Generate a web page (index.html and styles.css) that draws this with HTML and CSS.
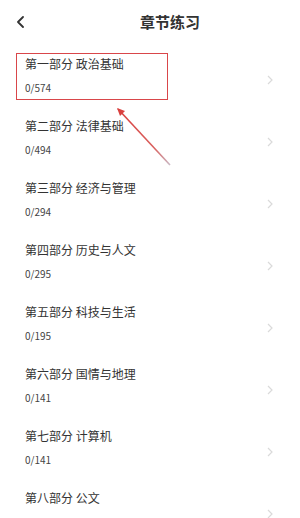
FILE: index.html
```
<!DOCTYPE html>
<html lang="zh-CN">
<head>
    <meta charset="UTF-8">
    <meta name="viewport" content="width=device-width, initial-scale=1.0">
    <title>章节练习</title>
    <link rel="stylesheet" href="styles.css">
</head>
<body>
    <div class="header">
        <span class="back">
            <svg width="10" height="12" viewBox="0 0 10 12"><path d="M7 1 L2 6 L7 11" fill="none" stroke="#333" stroke-width="1.8" stroke-linecap="round" stroke-linejoin="round"/></svg>
        </span>
        <div class="title">章节练习</div>
    </div>

    <div class="list">
        <div class="item">
            <div class="info">
                <div class="name">第一部分 政治基础</div>
                <div class="count">0/574</div>
            </div>
            <span class="arrow-right"><svg width="6" height="10" viewBox="0 0 6 10"><path d="M1 1 L5 5 L1 9" fill="none" stroke="#dadada" stroke-width="1.2"/></svg></span>
            <div class="mark-box"></div>
        </div>
        <div class="item">
            <div class="info">
                <div class="name">第二部分 法律基础</div>
                <div class="count">0/494</div>
            </div>
            <span class="arrow-right"><svg width="6" height="10" viewBox="0 0 6 10"><path d="M1 1 L5 5 L1 9" fill="none" stroke="#dadada" stroke-width="1.2"/></svg></span>
        </div>
        <div class="item">
            <div class="info">
                <div class="name">第三部分 经济与管理</div>
                <div class="count">0/294</div>
            </div>
            <span class="arrow-right"><svg width="6" height="10" viewBox="0 0 6 10"><path d="M1 1 L5 5 L1 9" fill="none" stroke="#dadada" stroke-width="1.2"/></svg></span>
        </div>
        <div class="item">
            <div class="info">
                <div class="name">第四部分 历史与人文</div>
                <div class="count">0/295</div>
            </div>
            <span class="arrow-right"><svg width="6" height="10" viewBox="0 0 6 10"><path d="M1 1 L5 5 L1 9" fill="none" stroke="#dadada" stroke-width="1.2"/></svg></span>
        </div>
        <div class="item">
            <div class="info">
                <div class="name">第五部分 科技与生活</div>
                <div class="count">0/195</div>
            </div>
            <span class="arrow-right"><svg width="6" height="10" viewBox="0 0 6 10"><path d="M1 1 L5 5 L1 9" fill="none" stroke="#dadada" stroke-width="1.2"/></svg></span>
        </div>
        <div class="item">
            <div class="info">
                <div class="name">第六部分 国情与地理</div>
                <div class="count">0/141</div>
            </div>
            <span class="arrow-right"><svg width="6" height="10" viewBox="0 0 6 10"><path d="M1 1 L5 5 L1 9" fill="none" stroke="#dadada" stroke-width="1.2"/></svg></span>
        </div>
        <div class="item">
            <div class="info">
                <div class="name">第七部分 计算机</div>
                <div class="count">0/141</div>
            </div>
            <span class="arrow-right"><svg width="6" height="10" viewBox="0 0 6 10"><path d="M1 1 L5 5 L1 9" fill="none" stroke="#dadada" stroke-width="1.2"/></svg></span>
        </div>
        <div class="item">
            <div class="info">
                <div class="name">第八部分 公文</div>
            </div>
            <span class="arrow-right"><svg width="6" height="10" viewBox="0 0 6 10"><path d="M1 1 L5 5 L1 9" fill="none" stroke="#dadada" stroke-width="1.2"/></svg></span>
        </div>
    </div>

    <!-- annotation arrow pointing at the first item -->
    <svg class="pointer" width="80" height="80" viewBox="0 0 80 80">
        <defs>
            <linearGradient id="fade" x1="0" y1="0" x2="1" y2="1">
                <stop offset="0" stop-color="#d9413f"/>
                <stop offset="0.7" stop-color="#d9605e"/>
                <stop offset="1" stop-color="#c9b8c4"/>
            </linearGradient>
        </defs>
        <path d="M4 4 L56 60" stroke="url(#fade)" stroke-width="1.6" fill="none"/>
        <path d="M3 3 L11 6 L6 11 Z" fill="#d9413f"/>
    </svg>
</body>
</html>
```

FILE: styles.css
```
body {
    margin: 0;
    background-color: #fff;
    font-family: "Noto Sans CJK SC", "Noto Sans", sans-serif;
    color: #333;
    position: relative;
    overflow: hidden;
    height: 518px;
}
.header {
    height: 44px;
    display: flex;
    align-items: center;
    padding-left: 16px;
}
.back {
    width: 10px;
    height: 12px;
    display: flex;
}
.title {
    flex: 1;
    text-align: center;
    font-size: 15px;
    font-weight: bold;
    color: #333;
    padding-left: 14px;
    margin-top: -2px;
}
.list {
    display: flex;
    flex-direction: column;
}
.item {
    position: relative;
    display: flex;
    padding: 11px 27px 11px 25px;
}
.info {
    flex: 1;
}
.name {
    font-size: 12px;
    line-height: 18px;
    color: #333;
}
.count {
    font-size: 10px;
    line-height: 14px;
    margin-top: 8px;
    color: #444;
}
.arrow-right {
    display: flex;
    margin-top: 20px;
    height: 10px;
}
.mark-box {
    position: absolute;
    left: 16px;
    top: 9px;
    width: 150px;
    height: 45px;
    border: 1.5px solid #d9464a;
}
.pointer {
    position: absolute;
    left: 114px;
    top: 105px;
}
```
